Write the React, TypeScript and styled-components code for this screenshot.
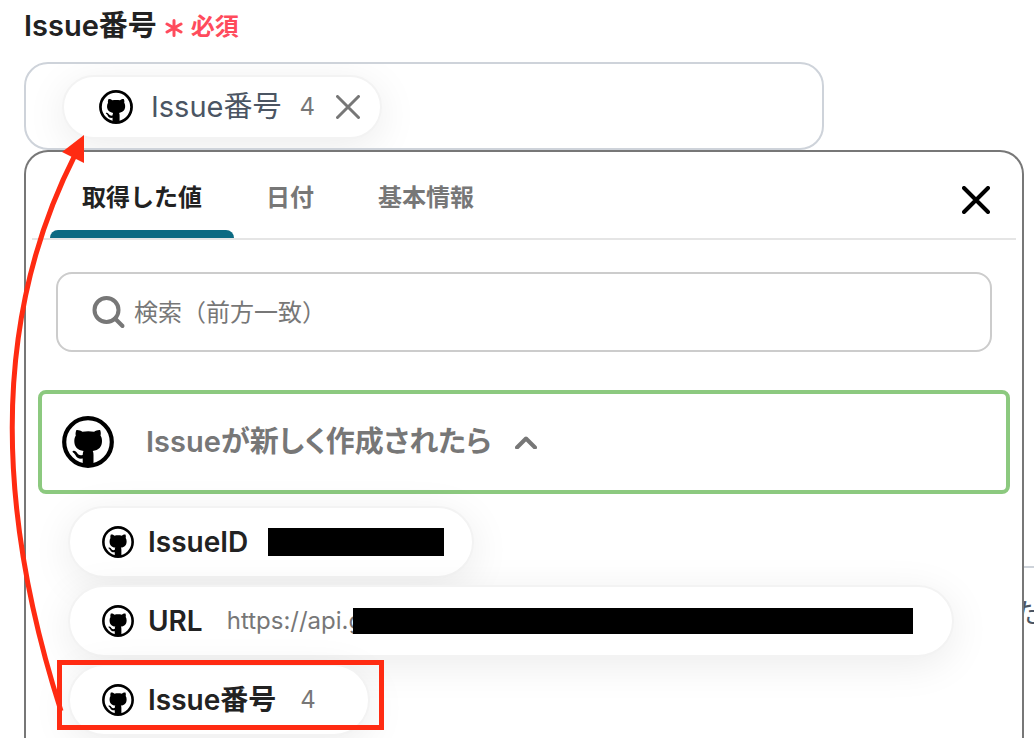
import React from "react";
import styled, { createGlobalStyle, css } from "styled-components";

const GlobalStyle = createGlobalStyle`
  *, *::before, *::after { box-sizing: border-box; }
  html, body { margin: 0; padding: 0; background: #fff; }
  body {
    font-family: Inter, "Noto Sans CJK JP", sans-serif;
    color: #222;
    overflow: hidden;
  }
  button, input { font: inherit; color: inherit; }
  button { margin: 0; padding: 0; border: 0; background: none; cursor: pointer; }
`;

const Page = styled.main`
  position: relative;
  display: flex;
  flex-direction: column;
  min-height: 100vh;
  padding: 6px 10px 0 24px;
`;

const Heading = styled.div`
  display: flex;
  align-items: center;
  gap: 8px;
  height: 40px;
  margin-bottom: 16px;
`;

const FieldLabel = styled.label`
  font-size: 29px;
  line-height: 40px;
  font-weight: 600;
`;

const Required = styled.span`
  display: flex;
  align-items: center;
  gap: 8px;
  padding-top: 2px;
  color: #ff4b5c;
  font-size: 24px;
  line-height: 40px;
  font-weight: 600;
`;

const Field = styled.div`
  display: flex;
  align-items: center;
  width: 80%;
  height: 88px;
  padding: 2px 36px 0;
  border: 2px solid #ced3da;
  border-radius: 24px;
  overflow: hidden;
`;

const FieldInput = styled.input`
  flex: 1;
  min-width: 0;
  height: 56px;
  border: 0;
  outline: 0;
  background: transparent;
`;

const chipSurface = css`
  display: flex;
  align-items: center;
  border: 2px solid #f3f3f3;
  background: #fff;
  box-shadow: 0 8px 40px rgba(0, 0, 0, 0.08);
  white-space: nowrap;
`;

const SelectedChip = styled.div`
  ${chipSurface}
  height: 64px;
  padding: 0 20px 0 35px;
  border-radius: 32px;
`;

const SelectedName = styled.span`
  margin: 0 18px;
  font-size: 29px;
  line-height: 40px;
  color: #4b5563;
`;

const Value = styled.span`
  font-size: 24px;
  line-height: 32px;
  font-weight: 400;
  color: #777;
`;

const RemoveButton = styled.button`
  display: flex;
  margin-left: 21px;
  color: #777;
`;

const Layers = styled.div`
  display: grid;
  flex: 1;
`;

const Behind = styled.section`
  grid-area: 1 / 1;
  margin: 416px -18px 0 0;
  border-top: 2px solid #ced3da;
  padding-top: 26px;
  text-align: right;
  font-size: 28px;
  line-height: 40px;
  color: #4b5563;
`;

const Panel = styled.section`
  position: relative;
  grid-area: 1 / 1;
  min-width: 0;
  border: 2px solid #777;
  border-bottom: 0;
  border-radius: 24px 24px 0 0;
  background: #fff;
`;

const PanelHeader = styled.header`
  display: flex;
  align-items: center;
  justify-content: space-between;
  height: 88px;
  margin: 0 6px;
  padding: 0 26px 0 18px;
  border-bottom: 2px solid #e5e5e5;
`;

const Tabs = styled.div`
  display: flex;
  align-self: stretch;
`;

const Tab = styled.button<{ $active?: boolean }>`
  display: flex;
  flex-direction: column;
  justify-content: space-between;
  padding-top: 26px;
  font-size: 24px;
  line-height: 40px;
  font-weight: 600;
  color: ${(p) => (p.$active ? "#222" : "#777")};

  span { padding: 0 32px; }

  &::after {
    content: "";
    width: 100%;
    height: 8px;
    border-radius: 8px 8px 0 0;
    background: ${(p) => (p.$active ? "#0c6a82" : "transparent")};
  }
`;

const CloseButton = styled.button`
  display: flex;
  margin-top: 10px;
  color: #000;
`;

const SearchBox = styled.label`
  display: flex;
  align-items: center;
  gap: 8px;
  height: 80px;
  margin: 32px 30px 38px;
  padding: 2px 34px 0;
  border: 2px solid #ccc;
  border-radius: 16px;
  color: #777;
`;

const SearchInput = styled.input`
  flex: 1;
  min-width: 0;
  padding: 0;
  border: 0;
  outline: 0;
  background: transparent;
  font-size: 24px;
  line-height: 40px;
  &::placeholder { color: #777; opacity: 1; }
`;

const Trigger = styled.button`
  display: flex;
  align-items: center;
  width: calc(100% - 24px);
  height: 104px;
  margin: 0 12px 12px;
  padding: 0 20px;
  border: 4px solid #8cc97f;
  border-radius: 8px;
  color: #777;
`;

const TriggerName = styled.span`
  margin: 0 24px 0 32px;
  font-size: 29px;
  line-height: 40px;
  font-weight: 600;
  font-feature-settings: "palt";
`;

const ChipList = styled.ul`
  display: flex;
  flex-direction: column;
  align-items: flex-start;
  gap: 7px;
  margin: 0;
  padding: 0 42px;
  list-style: none;
`;

const ChipItem = styled.li`
  position: relative;
`;

const Chip = styled.button<{ $end?: number }>`
  ${chipSurface}
  height: 72px;
  padding: 0 ${(p) => p.$end ?? 28}px 0 32px;
  border-radius: 36px;
`;

const ChipName = styled.span`
  margin: 0 24px 0 14px;
  font-size: 28px;
  line-height: 40px;
  font-weight: 600;
`;

const Redaction = styled.span<{ $width: number; $overlap?: boolean }>`
  width: ${(p) => p.$width}px;
  height: ${(p) => (p.$overlap ? 26 : 28)}px;
  margin-left: ${(p) => (p.$overlap ? -10 : -4)}px;
  background: #000;
`;

const Highlight = styled.span`
  position: absolute;
  inset: -4px -14px 6px -11px;
  border: 5px solid #ff2b12;
  pointer-events: none;
`;

const Arrow = styled.svg`
  position: absolute;
  left: 0;
  top: 130px;
  pointer-events: none;
`;

function Octocat({ size }: { size: number }) {
  return (
    <svg width={size} height={size} viewBox="0 0 52 52" aria-hidden="true">
      <circle cx="26" cy="26" r="23.8" fill="#fff" stroke="#000" strokeWidth="4.2" />
      <path
        d="M14.4 14c2-.3 4.300.6 6 1.700 3.500-.7 8.200-.7 11.700 0 1.700-1.100 4-2 6-1.700.8 1.900.9 4 .4 5.600 1.100 1.600 1.500 3.300 1.500 5.400 0 6-3.300 9.100-9.300 10 .6.900.8 2.200.8 4V50H20.700v-7.400c-4 .5-6-.8-7.200-3.300-.6-1.300-1.400-2.100-2.500-2.900-.9-.7-.4-1.700.8-1.600 1.800.2 2.900 1.500 3.700 2.800 1.200 1.700 2.700 2 5.200 1.500.1-1.600.3-3.100.9-4.100-6-.9-9.300-4-9.300-10 0-2.100.5-3.800 1.500-5.400-.5-1.600-.2-3.700.6-5.600z"
        fill="#000"
      />
    </svg>
  );
}

function Cross({ size, stroke }: { size: number; stroke: number }) {
  const a = stroke / 2;
  const b = size - a;
  return (
    <svg width={size} height={size} aria-hidden="true">
      <path
        d={`M${a} ${a}L${b} ${b}M${b} ${a}L${a} ${b}`}
        stroke="currentColor"
        strokeWidth={stroke}
        strokeLinecap="round"
      />
    </svg>
  );
}

export default function App() {
  return (
    <>
      <GlobalStyle />
      <Page>
        <Heading>
          <FieldLabel htmlFor="issue-number">Issue番号</FieldLabel>
          <Required>
            <svg width="18" height="20" viewBox="0 0 18 20" aria-hidden="true">
              <path
                d="M9 3.500v15M2 7l14 8M16 7l-14 8"
                stroke="currentColor"
                strokeWidth="3"
                strokeLinecap="round"
              />
            </svg>
            必須
          </Required>
        </Heading>
        <Field>
          <SelectedChip>
            <Octocat size={34} />
            <SelectedName>Issue番号</SelectedName>
            <Value>4</Value>
            <RemoveButton type="button" aria-label="削除">
              <Cross size={24} stroke={3} />
            </RemoveButton>
          </SelectedChip>
          <FieldInput id="issue-number" type="text" />
        </Field>

        <Layers>
          <Behind>た</Behind>
          <Panel>
            <PanelHeader>
              <Tabs role="tablist">
                <Tab type="button" role="tab" aria-selected="true" $active>
                  <span>取得した値</span>
                </Tab>
                <Tab type="button" role="tab" aria-selected="false">
                  <span>日付</span>
                </Tab>
                <Tab type="button" role="tab" aria-selected="false">
                  <span>基本情報</span>
                </Tab>
              </Tabs>
              <CloseButton type="button" aria-label="閉じる">
                <Cross size={28} stroke={4} />
              </CloseButton>
            </PanelHeader>

            <SearchBox>
              <svg width="34" height="34" viewBox="0 0 34 34" fill="none" aria-hidden="true">
                <circle cx="14.500" cy="14" r="12" stroke="currentColor" strokeWidth="4" />
                <path d="M23 22.500l7.500 7.500" stroke="currentColor" strokeWidth="4" strokeLinecap="round" />
              </svg>
              <SearchInput type="text" aria-label="検索" placeholder="検索（前方一致）" />
            </SearchBox>

            <Trigger type="button" aria-expanded="true">
              <Octocat size={52} />
              <TriggerName>Issueが新しく作成されたら</TriggerName>
              <svg width="22" height="14" viewBox="0 0 22 14" fill="none" aria-hidden="true">
                <path
                  d="M2 12.500l9-9 9 9"
                  stroke="currentColor"
                  strokeWidth="4"
                  strokeLinecap="round"
                  strokeLinejoin="round"
                />
              </svg>
            </Trigger>

            <ChipList>
              <ChipItem>
                <Chip type="button">
                  <Octocat size={32} />
                  <ChipName>IssueID</ChipName>
                  <Redaction $width={176} />
                </Chip>
              </ChipItem>
              <ChipItem>
                <Chip type="button" $end={39}>
                  <Octocat size={32} />
                  <ChipName>URL</ChipName>
                  <Value>https://api.g</Value>
                  <Redaction $width={560} $overlap />
                </Chip>
              </ChipItem>
              <ChipItem>
                <Chip type="button" $end={52}>
                  <Octocat size={32} />
                  <ChipName>Issue番号</ChipName>
                  <Value>4</Value>
                </Chip>
                <Highlight />
              </ChipItem>
            </ChipList>
          </Panel>
        </Layers>

        <Arrow width="90" height="586" viewBox="0 130 90 586" aria-hidden="true">
          <path d="M61 711C6 540-19 340 75 155" fill="none" stroke="#ff2b12" strokeWidth="5" />
          <path d="M84 135L62 152l22 11z" fill="#ff2b12" />
        </Arrow>
      </Page>
    </>
  );
}
